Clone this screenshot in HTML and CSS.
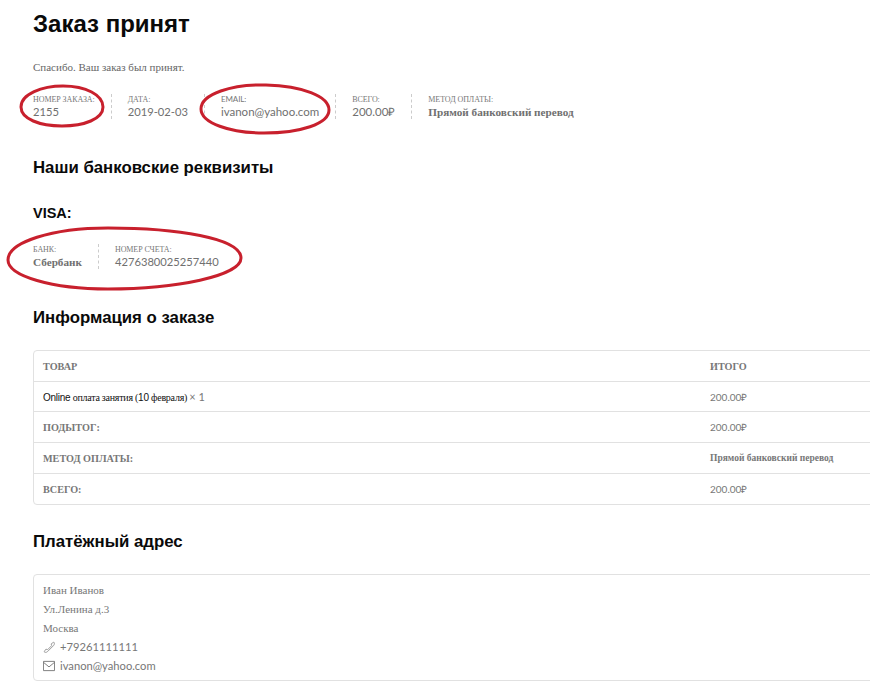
FILE: index.html
```html
<!DOCTYPE html>
<html lang="ru">
<head>
<meta charset="utf-8">
<title>Заказ принят</title>
<link rel="stylesheet" href="styles.css">
</head>
<body>
<main class="page">
  <h1 class="title">Заказ принят</h1>
  <p class="thanks">Спасибо. Ваш заказ был принят.</p>
  <ul class="overview">
    <li class="item"><span class="label">Номер заказа:</span><strong class="value value-num">2155</strong></li>
    <li class="item"><span class="label">Дата:</span><strong class="value value-num">2019-02-03</strong></li>
    <li class="item"><span class="label label-latin">Email:</span><strong class="value">ivanon@yahoo.com</strong></li>
    <li class="item"><span class="label">Всего:</span><strong class="value">200.00₽</strong></li>
    <li class="item"><span class="label">Метод оплаты:</span><strong class="value value-bold">Прямой банковский перевод</strong></li>
  </ul>
  <h2 class="heading heading-bank">Наши банковские реквизиты</h2>
  <h3 class="subheading">VISA:</h3>
  <ul class="overview overview-bank">
    <li class="item"><span class="label">Банк:</span><strong class="value value-bold">Сбербанк</strong></li>
    <li class="item"><span class="label">Номер счета:</span><strong class="value value-num">4276380025257440</strong></li>
  </ul>
  <h2 class="heading heading-order">Информация о заказе</h2>
  <table class="order">
    <thead>
      <tr><th class="col-name">Товар</th><th class="col-total">Итого</th></tr>
    </thead>
    <tbody>
      <tr class="row-short"><td class="product"><span class="latin">Online</span> оплата занятия (<span class="latin">10</span> февраля) <span class="qty">× 1</span></td><td class="amount">200.00₽</td></tr>
    </tbody>
    <tfoot>
      <tr><th>Подытог:</th><td class="amount">200.00₽</td></tr>
      <tr><th>Метод оплаты:</th><td class="method">Прямой банковский перевод</td></tr>
      <tr class="row-short"><th>Всего:</th><td class="amount">200.00₽</td></tr>
    </tfoot>
  </table>
  <h2 class="heading heading-address">Платёжный адрес</h2>
  <address class="address">
    <div class="line">Иван Иванов</div>
    <div class="line">Ул.Ленина д.3</div>
    <div class="line">Москва</div>
    <div class="line line-icon">
      <svg class="icon icon-phone" viewBox="0 0 13 13" aria-hidden="true"><path d="M11.600 1.200C12.600 2.200 12.600 3.600 11.400 5L5 11.400C3.600 12.600 2.200 12.600 1.200 11.600L3.200 8.800 5 9.400 9.400 5 8.800 3.200Z"/></svg>
      <span class="contact">+79261111111</span>
    </div>
    <div class="line line-icon">
      <svg class="icon" viewBox="0 0 13 13" aria-hidden="true"><path d="M.5 1.500h12v10H.5zM.5 2.500l6 5 6-5"/></svg>
      <span class="contact">ivanon@yahoo.com</span>
    </div>
  </address>
</main>
<svg class="marks" viewBox="0 0 870 686" aria-hidden="true">
  <path d="M21 107C21 94 42 86 63 86 86 86 103 95 103 107 103 119 84 126 62 126 40 126 21 119 21 107Z"/>
  <path d="M201 109C201 94 232 84 266 85 302 86 329 96 329 110 329 124 300 133 264 133 230 133 201 123 201 109Z"/>
  <path d="M8 260C8 242 52 228 108 228 176 228 241 238 241 258 241 276 176 289 108 289 52 289 8 276 8 260Z"/>
</svg>
</body>
</html>
```
FILE: styles.css
```css
html, body { margin: 0; padding: 0; background: #fff; overflow: hidden; height: 686px; }
body { position: relative; font-family: "Liberation Serif", serif; font-size: 11.500px; color: #777; }
.page { width: 1000px; padding: 0 0 0 33px; }
.title { margin: 0; padding-top: 9px; font: bold 24px/29px "Liberation Sans", sans-serif; color: #0a0a0a; }
.thanks { margin: 21px 0 0; line-height: 16px; font-size: 11px; color: #666; }
.overview { display: flex; list-style: none; margin: 19px 0 0; padding: 0; }
.item { display: flex; flex-direction: column; height: 25px; padding: 0 16px; border-right: 1px dashed #ccc; }
.item:first-child { padding-left: 0; }
.item:last-child { border-right: 0; }
.label { font-size: 8px; line-height: 11px; letter-spacing: -0.08px; text-transform: uppercase; color: #777; }
.label-latin { font-family: "Lato", sans-serif; }
.value { font-family: "Lato", "Liberation Serif", sans-serif; font-weight: 400; font-size: 11.500px; line-height: 14px; color: #707070; }
.value-num { font-size: 11.200px; }
.value-bold { font-family: "Liberation Serif", serif; font-weight: 700; font-size: 11.200px; }
.heading { margin: 0; font: bold 16.800px/20px "Liberation Sans", sans-serif; color: #0a0a0a; }
.heading-bank { margin-top: 39px; }
.subheading { margin: 26px 0 0; font: bold 14.500px/18px "Liberation Sans", sans-serif; color: #0a0a0a; }
.overview-bank { margin-top: 22px; }
.heading-order { margin-top: 39px; }
.order { width: 100%; margin-top: 22px; border: 1px solid #e1e1e1; border-radius: 4px; border-spacing: 0; table-layout: fixed; font-size: 11px; }
.order th, .order td { height: 31px; padding: 0 9px; text-align: left; border-bottom: 1px solid #e1e1e1; box-sizing: border-box; }
.order .row-short th, .order .row-short td { height: 30px; }
.order tfoot tr:last-child th, .order tfoot tr:last-child td { border-bottom: 0; }
.col-name { width: 667px; }
.order th { font-family: "Liberation Serif", serif; font-weight: 700; text-transform: uppercase; color: #777; font-size: 10.200px; }
.product { color: #111; font-family: "Liberation Serif", serif; font-size: 10px; letter-spacing: -0.25px; }
.latin { font-family: "Liberation Sans", sans-serif; }
.qty { color: #777; font-family: "Lato", sans-serif; font-size: 11px; letter-spacing: 0; }
.amount { font-family: "Lato", sans-serif; font-size: 10px; }
.method { font-family: "Liberation Serif", serif; font-weight: 700; font-size: 9.500px; }
.heading-address { margin-top: 27px; }
.address { margin-top: 22px; padding: 6px 9px 4px; border: 1px solid #e1e1e1; border-radius: 4px; font-style: normal; font-size: 11px; color: #777; }
.line { height: 19px; line-height: 19px; }
.line-icon { display: flex; align-items: flex-start; gap: 5px; }
.contact { font-family: "Lato", sans-serif; font-size: 11.200px; line-height: 18px; }
.icon { width: 12px; height: 12px; margin-top: 3px; fill: none; stroke: #777; stroke-width: 1; }
.icon-phone { stroke: #8a8a8a; stroke-width: .9; }
.marks { position: absolute; left: 0; top: 0; width: 870px; height: 686px; fill: none; stroke: #c8202d; stroke-width: 3; pointer-events: none; }
```
